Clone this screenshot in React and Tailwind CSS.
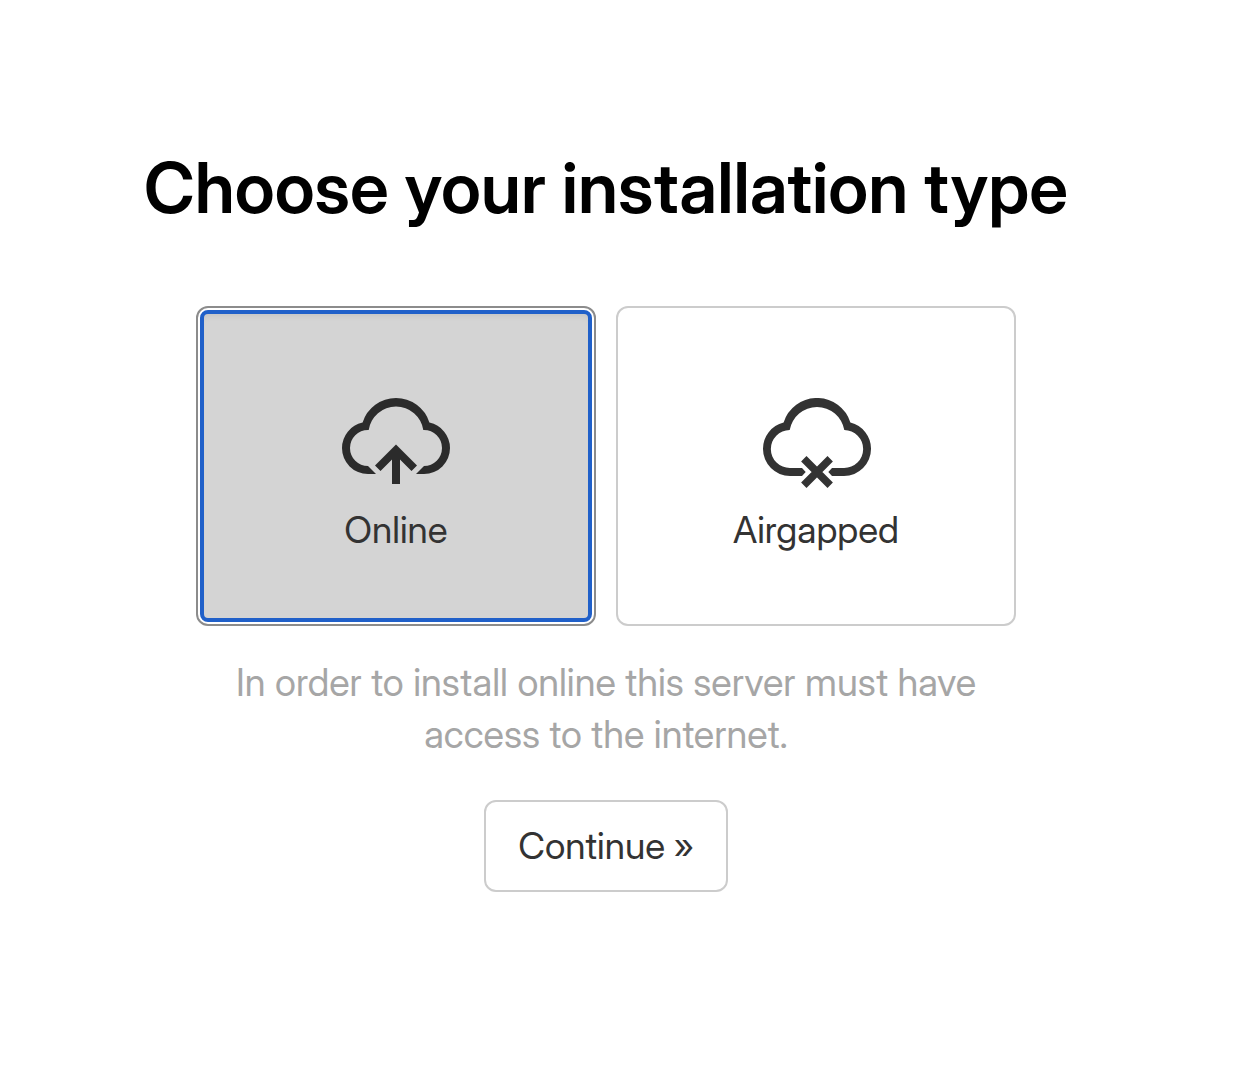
import React, { useState } from "react";

function CloudUpload() {
  return (
    <svg width="108" height="92" viewBox="0 0 108 92" fill="#2b2b2b" aria-hidden="true">
      <path d="M20.6 24.6A35 35 0 0 1 87.4 24.6A26 26 0 0 1 108 50A26 26 0 0 1 82 76H74L82 68A18 18 0 0 0 82 32H81.3A27.6 27.6 0 0 0 26.7 32H26A18 18 0 0 0 26 68L34 76H26A26 26 0 0 1 0 50A26 26 0 0 1 20.6 24.6Z" />
      <path d="M54 46.5L75 67.5L69.5 73L58 61.5V86H50V61.5L38.5 73L33 67.5Z" />
    </svg>
  );
}

function CloudOff() {
  return (
    <svg width="110" height="92" viewBox="-2 0 110 92" fill="#333" aria-hidden="true">
      <path d="M20.6 24.5A35 35 0 0 1 87.4 24.5A27 27 0 0 1 108 51A27 27 0 0 1 81 78H69L65.3 74L69 70H81A19 19 0 0 0 81.3 32A27.7 27.7 0 0 0 26.7 32A19 19 0 0 0 27 70H39L42.7 74L39 78H27A27 27 0 0 1 0 51A27 27 0 0 1 20.6 24.5Z" />
      <path d="M40.8 60.8L67.2 87.2M67.2 60.8L40.8 87.2" stroke="#333" strokeWidth="7.6" />
    </svg>
  );
}

const types = [
  {
    id: "online",
    label: "Online",
    Icon: CloudUpload,
    note: "In order to install online this server must have access to the internet.",
  },
  {
    id: "airgapped",
    label: "Airgapped",
    Icon: CloudOff,
    note: "In order to install airgapped you will need to provide an airgap package.",
  },
];

export default function App() {
  const [selected, setSelected] = useState("online");
  return (
    <main className="flex min-h-screen flex-col items-center bg-white pr-11 pt-[148px] font-['Inter_Display',Inter,sans-serif] text-[#333]">
      <h1 className="text-center text-[70px] leading-20 font-semibold text-black">Choose your installation type</h1>
      <div className="mt-[78px] flex gap-5">
        {types.map(({ id, label, Icon }) => {
          const active = id === selected;
          return (
            <button
              key={id}
              type="button"
              aria-pressed={active}
              onClick={() => setSelected(id)}
              className={`flex h-80 w-100 rounded-xl border-2 bg-white p-0.5 text-[37px] outline-none ${active ? "border-[#8c8c8c]" : "border-[#ccc]"}`}
            >
              <span
                className={`flex h-full w-full flex-col items-center rounded-lg border-4 pt-[84px] ${active ? "border-[#2060c9] bg-[#d4d4d4] shadow-[inset_0_6px_6px_-4px_rgba(0,0,0,0.08)]" : "border-transparent"}`}
              >
                <Icon />
                <span className="mt-5 leading-10">{label}</span>
              </span>
            </button>
          );
        })}
      </div>
      <p className="mt-[30px] w-full max-w-[800px] text-center text-[38px] leading-[52px] text-[#a6a6a6]">
        {types.find((type) => type.id === selected).note}
      </p>
      <button type="button" className="mt-10 rounded-xl border-2 border-[#ccc] bg-white px-8 py-6 text-[37px] leading-10">
        Continue »
      </button>
    </main>
  );
}
